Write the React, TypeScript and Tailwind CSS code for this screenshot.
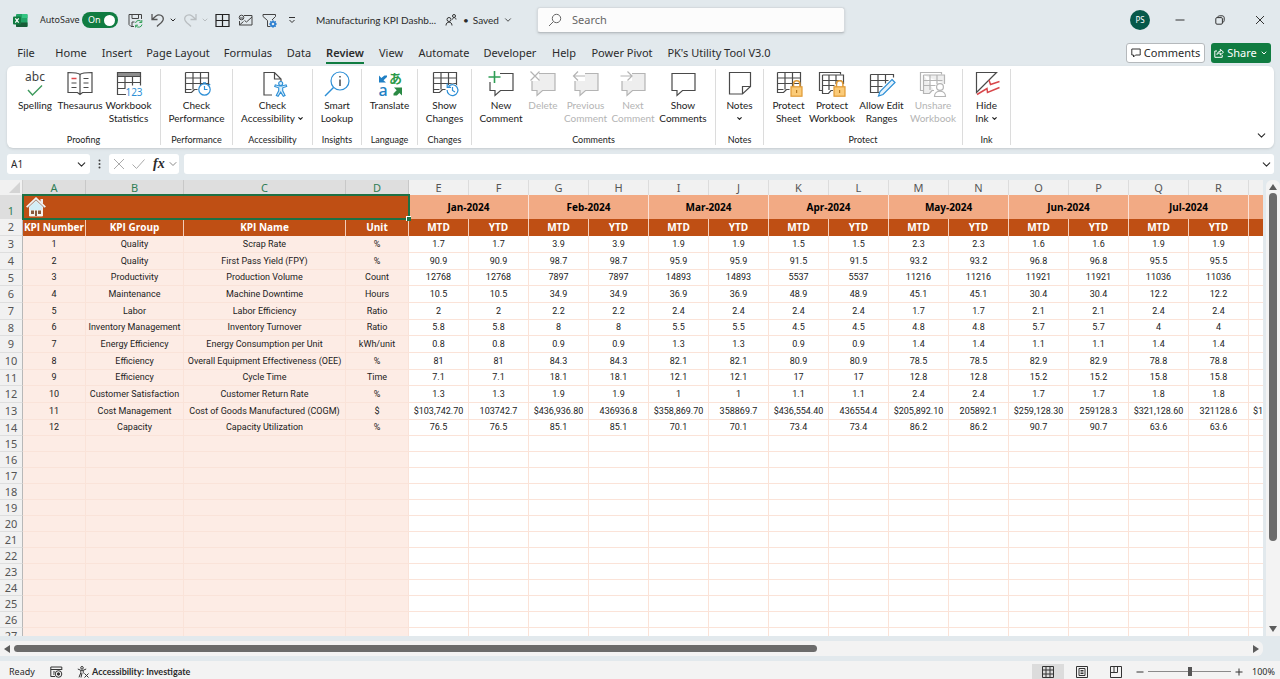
import type { ReactNode } from "react";
import clsx from "clsx";
import { ChevronDown } from "lucide-react";

type Tool = {
  label: string[];
  icon: ReactNode;
  width: string;
  disabled?: boolean;
  menu?: boolean;
};

type Group = { name: string; width: string; tools: Tool[] };

const tabs = [
  { name: "File", width: "w-[48px]" },
  { name: "Home", width: "w-[42px]" },
  { name: "Insert", width: "w-[50px]" },
  { name: "Page Layout", width: "w-[72px]" },
  { name: "Formulas", width: "w-[68px]" },
  { name: "Data", width: "w-[34px]" },
  { name: "Review", width: "w-[58px]" },
  { name: "View", width: "w-[34px]" },
  { name: "Automate", width: "w-[72px]" },
  { name: "Developer", width: "w-[60px]" },
  { name: "Help", width: "w-[48px]" },
  { name: "Power Pivot", width: "w-[68px]" },
  { name: "PK's Utility Tool V3.0", width: "w-[126px]" },
];

const letters = "ABCDEFGHIJKLMNOPQR".split("");

const months = [
  "Jan-2024",
  "Feb-2024",
  "Mar-2024",
  "Apr-2024",
  "May-2024",
  "Jun-2024",
  "Jul-2024",
];

type Kpi = {
  group: string;
  name: string;
  unit: string;
  mtd: string[];
  ytd?: string[];
  next?: string;
};

// ytd is only given where it is written differently from mtd
const kpis: Kpi[] = [
  { group: "Quality", name: "Scrap Rate", unit: "%", mtd: ["1.7", "3.9", "1.9", "1.5", "2.3", "1.6", "1.9"] },
  { group: "Quality", name: "First Pass Yield (FPY)", unit: "%", mtd: ["90.9", "98.7", "95.9", "91.5", "93.2", "96.8", "95.5"] },
  { group: "Productivity", name: "Production Volume", unit: "Count", mtd: ["12768", "7897", "14893", "5537", "11216", "11921", "11036"] },
  { group: "Maintenance", name: "Machine Downtime", unit: "Hours", mtd: ["10.5", "34.9", "36.9", "48.9", "45.1", "30.4", "12.2"] },
  { group: "Labor", name: "Labor Efficiency", unit: "Ratio", mtd: ["2", "2.2", "2.4", "2.4", "1.7", "2.1", "2.4"] },
  { group: "Inventory Management", name: "Inventory Turnover", unit: "Ratio", mtd: ["5.8", "8", "5.5", "4.5", "4.8", "5.7", "4"] },
  { group: "Energy Efficiency", name: "Energy Consumption per Unit", unit: "kWh/unit", mtd: ["0.8", "0.9", "1.3", "0.9", "1.4", "1.1", "1.4"] },
  { group: "Efficiency", name: "Overall Equipment Effectiveness (OEE)", unit: "%", mtd: ["81", "84.3", "82.1", "80.9", "78.5", "82.9", "78.8"] },
  { group: "Efficiency", name: "Cycle Time", unit: "Time", mtd: ["7.1", "18.1", "12.1", "17", "12.8", "15.2", "15.8"] },
  { group: "Customer Satisfaction", name: "Customer Return Rate", unit: "%", mtd: ["1.3", "1.9", "1", "1.1", "2.4", "1.7", "1.8"] },
  {
    group: "Cost Management",
    name: "Cost of Goods Manufactured (COGM)",
    unit: "$",
    mtd: ["$103,742.70", "$436,936.80", "$358,869.70", "$436,554.40", "$205,892.10", "$259,128.30", "$321,128.60"],
    ytd: ["103742.7", "436936.8", "358869.7", "436554.4", "205892.1", "259128.3", "321128.6"],
    next: "$1",
  },
  { group: "Capacity", name: "Capacity Utilization", unit: "%", mtd: ["76.5", "85.1", "70.1", "73.4", "86.2", "90.7", "63.6"] },
];

const emptyRows = Array.from({ length: 13 }, (_, i) => i + 15);

function Icon({ children, muted }: { children: ReactNode; muted?: boolean }) {
  return (
    <svg
      viewBox="0 0 28 26"
      className={clsx("h-[26px] w-[28px] shrink-0 overflow-visible", muted ? "text-[#b4b4b4]" : "text-[#4a4a4a]")}
      fill="none"
      stroke="currentColor"
      strokeWidth="1.2"
      aria-hidden="true"
    >
      {children}
    </svg>
  );
}

const Sheet = () => (
  <path
    d="M2.5 1.5h23v20h-3M2.5 1.5v20h6l3-3h3M2.5 7h23M2.5 12.5h23M8.5 18.5h-6M10 1.5v17M17.5 1.5v14"
    fill="none"
  />
);

const Lock = () => (
  <g stroke="#e09a35">
    <path d="M18.5 16v-3a3.2 3.2 0 0 1 6.4 0v3" fill="none" strokeWidth="1.5" />
    <rect x="16" y="15.8" width="11" height="9.4" fill="#fbcb78" />
    <path d="M21.6 19v3" stroke="#b87a20" />
  </g>
);

const bubble = "M3 2.5h23v17H13.5L8 24.5v-5H3z";

const icons = {
  spelling: (
    <Icon>
      <text x="14" y="10" textAnchor="middle" fontSize="12" fill="#3f3f3f" stroke="none" fontFamily="Noto Sans">
        abc
      </text>
      <path d="M7 19l4.5 5L21 14.5" stroke="#3d9a5c" strokeWidth="1.4" />
    </Icon>
  ),
  thesaurus: (
    <Icon>
      <path d="M14 3.5C12 1.5 8 1.5 2 1.5v20h9.5l2.5 2 2.5-2H26v-20c-6 0-10 0-12 2zM14 3.5v20" />
      <path d="M5.5 7.5h5" stroke="#e0474c" strokeWidth="1.5" />
      <path d="M5.5 12h5M5.5 16.5h5M17.5 7.5h5M17.5 12h5M17.5 16.5h5" />
    </Icon>
  ),
  statistics: (
    <Icon>
      <path d="M2.5 1.5h23v4h-23z" fill="#8d8d8d" />
      <path d="M2.5 5.5v18H11M25.5 5.5v9M2.5 11.5h23M2.5 17.5h8M10 5.5v12M17.5 5.5v9" />
      <text x="19" y="25" textAnchor="middle" fontSize="10" fill="#2d8fd6" stroke="none" fontFamily="Noto Sans">
        123
      </text>
    </Icon>
  ),
  performance: (
    <Icon>
      <Sheet />
      <circle cx="21.5" cy="18.5" r="5.7" fill="#fff" stroke="#2d8fd6" />
      <path d="M21.5 15v3.5h3M20 11.8h3M26 13l1.2 1.2" stroke="#2d8fd6" />
    </Icon>
  ),
  accessibility: (
    <Icon>
      <path d="M13 24H5V1.5h10.5L22 8v3M15.5 1.5V8H22" />
      <g stroke="#2d8fd6" fill="#d9eefb" strokeWidth="1.1">
        <path d="M15.7 15.5l4 1.3v3l-2.4 4.7 1.8.8 2.6-4.2 2.6 4.2 1.8-.8-2.4-4.7v-3l4-1.3-.6-1.7-4.2 1.2h-2.4l-4.2-1.2z" />
        <circle cx="21.7" cy="12.5" r="2" />
      </g>
    </Icon>
  ),
  lookup: (
    <Icon>
      <circle cx="17" cy="10" r="9" stroke="#2d8fd6" />
      <path d="M10.5 16.5L2 25" stroke="#2d8fd6" strokeWidth="1.5" />
      <path d="M17 8.5V15M17 5v1.6" strokeWidth="1.5" />
    </Icon>
  ),
  translate: (
    <Icon>
      <text x="7" y="25" textAnchor="middle" fontSize="16" fontWeight="500" fill="#1f7fc4" stroke="none" fontFamily="Noto Sans">
        a
      </text>
      <text x="19.5" y="12" textAnchor="middle" fontSize="13" fontWeight="700" fill="#2b9a4a" stroke="none" fontFamily="Noto Sans CJK JP">
        あ
      </text>
      <path d="M3 4.5v7h7L7.5 9.2 11 6V4.5H8.5L5.3 7z" fill="#1f7fc4" stroke="none" />
      <path d="M18 16.5h8v8l-2.6-2.6-2.5 2.6h-3.4v-2l3.2-3.2z" fill="#2b8a45" stroke="none" />
    </Icon>
  ),
  changes: (
    <Icon>
      <Sheet />
      <circle cx="21.5" cy="19" r="6.5" fill="#fff" stroke="none" />
      <path d="M17.5 15.5a5.4 5.4 0 1 1-1.4 3.5M16.2 12.5v3.8H20M21.5 16v3.5L24 21" stroke="#2d8fd6" />
    </Icon>
  ),
  newComment: (
    <Icon>
      <path d="M13 2.5h13v17H13.5L8 24.5v-5H3V11" />
      <path d="M7.5 0v12M1.5 6h12" stroke="#2f9e55" strokeWidth="1.6" />
    </Icon>
  ),
  deleteComment: (
    <Icon muted>
      <path d={bubble} fill="#eee" />
      <path d="M1 0h9v10H1z" fill="#fff" stroke="none" />
      <path d="M1.5.5l9 9M10.5.5l-9 9" />
    </Icon>
  ),
  previous: (
    <Icon muted>
      <path d={bubble} fill="#eee" />
      <path d="M1 0h12v10H1z" fill="#fff" stroke="none" />
      <path d="M1.5 5H13M6 .5L1.5 5 6 9.5" />
    </Icon>
  ),
  next: (
    <Icon muted>
      <path d={bubble} fill="#eee" />
      <path d="M1 0h12v10H1z" fill="#fff" stroke="none" />
      <path d="M1.5 5H13M8.5.5L13 5 8.5 9.5" />
    </Icon>
  ),
  comments: (
    <Icon>
      <path d={bubble} />
    </Icon>
  ),
  notes: (
    <Icon>
      <path d="M3.5 1.5h21v14l-8 7.5h-13zM16.5 23v-7.5h8" />
    </Icon>
  ),
  protectSheet: (
    <Icon>
      <Sheet />
      <Lock />
    </Icon>
  ),
  protectWorkbook: (
    <Icon>
      <path d="M4.5 19.5h-3v-18h21v2" />
      <path d="M4.5 4h21v9M4.5 4v18.5h6l2.5-3h2M4.5 9.5h19M4.5 14.5h12M11 4v15M18 4v9" />
      <Lock />
    </Icon>
  ),
  editRanges: (
    <Icon>
      <path d="M2.5 3.5h23v3M2.5 3.5v18h9M2.5 9.5h18M2.5 15.5h12M10 3.5v18M17.5 3.5v9" />
      <path d="M24 8.5l3 3-12 12-4.5 1.5 1.5-4.5z" fill="#e8f4fc" stroke="#2d8fd6" />
    </Icon>
  ),
  unshare: (
    <Icon muted>
      <path d="M4.5 19.5h-3v-18h21v2" />
      <path d="M4.5 4h21v9M4.5 4v18.5h6l2.5-3h2M4.5 9.5h19M4.5 14.5h12M11 4v15M18 4v9" fill="#eee" />
      <circle cx="21" cy="16" r="3.4" fill="#fff" />
      <path d="M15.5 25.5c0-7 11-7 11 0z" fill="#fff" />
    </Icon>
  ),
  ink: (
    <Icon>
      <path d="M3.5 1.5h20l-20 20z" />
      <path d="M16 9l1.5 4.5 9-3M4 23.5l10-6 .5 4 12-5" stroke="#d8474b" strokeWidth="1.5" />
    </Icon>
  ),
};

const groups: Group[] = [
  {
    name: "Proofing",
    width: "w-[154px]",
    tools: [
      { label: ["Spelling"], icon: icons.spelling, width: "w-[43px]" },
      { label: ["Thesaurus"], icon: icons.thesaurus, width: "w-[47px]" },
      { label: ["Workbook", "Statistics"], icon: icons.statistics, width: "w-[50px]" },
    ],
  },
  {
    name: "Performance",
    width: "w-[72px]",
    tools: [{ label: ["Check", "Performance"], icon: icons.performance, width: "w-[60px]" }],
  },
  {
    name: "Accessibility",
    width: "w-[80px]",
    tools: [{ label: ["Check", "Accessibility"], icon: icons.accessibility, width: "w-[70px]", menu: true }],
  },
  {
    name: "Insights",
    width: "w-[49px]",
    tools: [{ label: ["Smart", "Lookup"], icon: icons.lookup, width: "w-[40px]" }],
  },
  {
    name: "Language",
    width: "w-[56px]",
    tools: [{ label: ["Translate"], icon: icons.translate, width: "w-[46px]" }],
  },
  {
    name: "Changes",
    width: "w-[54px]",
    tools: [{ label: ["Show", "Changes"], icon: icons.changes, width: "w-[44px]" }],
  },
  {
    name: "Comments",
    width: "w-[244px]",
    tools: [
      { label: ["New", "Comment"], icon: icons.newComment, width: "w-[46px]" },
      { label: ["Delete"], icon: icons.deleteComment, width: "w-[38px]", disabled: true },
      { label: ["Previous", "Comment"], icon: icons.previous, width: "w-[47px]", disabled: true },
      { label: ["Next", "Comment"], icon: icons.next, width: "w-[48px]", disabled: true },
      { label: ["Show", "Comments"], icon: icons.comments, width: "w-[52px]" },
    ],
  },
  {
    name: "Notes",
    width: "w-[48px]",
    tools: [{ label: ["Notes", ""], icon: icons.notes, width: "w-[36px]", menu: true }],
  },
  {
    name: "Protect",
    width: "w-[199px]",
    tools: [
      { label: ["Protect", "Sheet"], icon: icons.protectSheet, width: "w-[41px]" },
      { label: ["Protect", "Workbook"], icon: icons.protectWorkbook, width: "w-[46px]" },
      { label: ["Allow Edit", "Ranges"], icon: icons.editRanges, width: "w-[53px]" },
      { label: ["Unshare", "Workbook"], icon: icons.unshare, width: "w-[50px]", disabled: true },
    ],
  },
  {
    name: "Ink",
    width: "w-[48px]",
    tools: [{ label: ["Hide", "Ink"], icon: icons.ink, width: "w-[36px]", menu: true }],
  },
];

function TitleBar() {
  return (
    <header className="flex h-10 shrink-0 items-center">
      <div className="flex w-[537px] shrink-0 items-center pl-[13px]">
        <svg viewBox="0 0 15 15" className="h-[15px] w-[15px]" aria-label="Excel">
          <rect x="3" y="1" width="11.5" height="13" rx="1" fill="#21a366" />
          <path d="M9 1h4.5a1 1 0 0 1 1 1v3H9z" fill="#33c481" />
          <path d="M3 9.5h11.5V13a1 1 0 0 1-1 1H4a1 1 0 0 1-1-1z" fill="#185c37" />
          <rect x="0" y="3.5" width="8" height="8" rx="1" fill="#107c41" />
          <path d="M2.3 5.3l3.4 4.4M5.7 5.3L2.3 9.7" stroke="#fff" strokeWidth="1.2" />
        </svg>
        <label className="ml-[12px] flex items-center gap-[6px] text-[9px]">
          <span className="w-[36px] whitespace-nowrap">AutoSave</span>
          <input type="checkbox" defaultChecked className="sr-only" />
          <span className="flex h-4 w-9 items-center justify-between rounded-full bg-[#107c41] pr-[3px] pl-[6px] text-white">
            On
            <span className="h-[11px] w-[11px] rounded-full bg-white" />
          </span>
        </label>
        <button aria-label="Save" className="ml-[10px]">
          <svg viewBox="0 0 15 15" className="h-[15px] w-[15px]" fill="none" stroke="#444">
            <path d="M6 13.5H3l-2-2v-10h12.5V6M4 1.5v4h6.5v-4M4 13V9h2.5" />
            <path d="M7.5 10a3.3 3.3 0 0 1 6-1M13.8 7v2.5h-2.5M14 11.5a3.3 3.3 0 0 1-6 1.2M7.6 14.5v-2.3H10" stroke="#2f9e55" />
          </svg>
        </button>
        <button aria-label="Undo" className="ml-[7px] flex items-center gap-[4px]">
          <svg viewBox="0 0 15 15" className="h-[15px] w-[15px]" fill="none" stroke="#555" strokeWidth="1.3">
            <path d="M2 1v5.5h5.5M2 6.5L6 3c3-2.5 7.5-.5 7.3 3-.1 3-4 5-6.3 7.5" />
          </svg>
          <ChevronDown size={8} strokeWidth={3} />
        </button>
        <button aria-label="Redo" disabled className="ml-[6px] flex items-center gap-[3px] text-[#b9bec1]">
          <svg viewBox="0 0 15 15" className="h-[15px] w-[15px]" fill="none" stroke="#b9bec1" strokeWidth="1.3">
            <path d="M13 1v5.5H7.5M13 6.5L9 3C6 .5 1.5 2.5 1.7 6c.1 3 4 5 6.3 7.5" />
          </svg>
          <ChevronDown size={8} strokeWidth={3} />
        </button>
        <button aria-label="Borders" className="ml-[6px]">
          <svg viewBox="0 0 15 15" className="h-[15px] w-[15px]" fill="none" stroke="#222" strokeWidth="1.2">
            <path d="M1 1.5h13v12H1zM7.5 1.5v12M1 7.5h13" />
          </svg>
        </button>
        <button aria-label="Email" className="ml-[8px]">
          <svg viewBox="0 0 15 15" className="h-[15px] w-[15px]" fill="none" stroke="#444">
            <path d="M6 2.5h8V12H1.5V8M6.5 7.5l2 1.5L14 4M1.5 12l4-3.5" />
            <circle cx="3.5" cy="4.5" r="2.3" />
            <path d="M2 5h3" />
          </svg>
        </button>
        <button aria-label="Filter" className="ml-[9px]">
          <svg viewBox="0 0 15 15" className="h-[15px] w-[15px]" fill="none" stroke="#444">
            <path d="M8 13.5H5.5v-6L1 3.5v-2h12.5v2L10 7" />
            <circle cx="11" cy="11" r="2.2" stroke="#2d7fd0" strokeWidth="1.8" />
            <path d="M11 7v1.5M11 13.5V15M7 11h1.5M13.5 11H15M8.2 8.2l1 1M12.8 12.8l1 1M13.8 8.2l-1 1M9.2 12.8l-1 1" stroke="#2d7fd0" />
          </svg>
        </button>
        <button aria-label="Customize Quick Access Toolbar" className="ml-[11px]">
          <svg viewBox="0 0 8 8" className="h-2 w-2" fill="none" stroke="#333">
            <path d="M1 1.5h6M1.5 4L4 6.5 6.5 4" />
          </svg>
        </button>
        <span className="ml-[20px] w-[124px] font-['Lato',sans-serif] text-[10px] whitespace-nowrap">
          Manufacturing KPI Dashb...
        </span>
        <svg viewBox="0 0 12 12" className="ml-[5px] h-3 w-3" fill="none" stroke="#333" aria-hidden="true">
          <circle cx="4" cy="5.5" r="2" />
          <path d="M1 11.5c0-4.5 6-4.5 6 0M7.5 5.5c0-2.5 3.5-2.5 3.5 0" />
          <circle cx="9" cy="2" r="1.5" />
        </svg>
        <button className="ml-[6px] flex items-center gap-[4px] font-['Lato',sans-serif] text-[10px] whitespace-nowrap">
          <span>•</span>
          <span>Saved</span>
          <ChevronDown size={10} />
        </button>
      </div>
      <label className="flex h-[26px] w-[308px] shrink-0 items-center rounded-[3px] border border-[#d5dade] border-b-[#b9bfc3] bg-[#fcfcfc] pl-[10px] shadow-sm">
        <svg viewBox="0 0 14 14" className="h-[14px] w-[14px]" fill="none" stroke="#666" aria-hidden="true">
          <circle cx="8.5" cy="5.5" r="4.2" />
          <path d="M5.5 8.5L1 13" />
        </svg>
        <input
          aria-label="Search"
          placeholder="Search"
          className="ml-[10px] min-w-0 flex-1 bg-transparent text-[11px] outline-none placeholder:text-[#666]"
        />
      </label>
      <div className="ml-auto flex items-center pr-[13px]">
        <button className="h-5 w-5 rounded-full bg-[#06594a] text-[8px] text-white">PS</button>
        <button aria-label="Minimize" className="ml-[23px] flex w-[14px] justify-center">
          <svg viewBox="0 0 10 10" className="h-[10px] w-[10px]" stroke="#333">
            <path d="M.5 5h9" />
          </svg>
        </button>
        <button aria-label="Restore" className="ml-[26px] flex w-[14px] justify-center">
          <svg viewBox="0 0 10 10" className="h-[10px] w-[10px]" fill="none" stroke="#333">
            <rect x=".8" y="2.6" width="6.6" height="6.6" rx="1.2" />
            <path d="M2.8 2.4C2.9 1.2 3.6.8 4.5.8h2.6c1.3 0 2.1.8 2.1 2v2.6c0 1-.6 1.8-1.7 1.9" />
          </svg>
        </button>
        <button aria-label="Close" className="ml-[26px] flex w-[14px] justify-center">
          <svg viewBox="0 0 10 10" className="h-[10px] w-[10px]" stroke="#333">
            <path d="M1 1l8 8M9 1L1 9" />
          </svg>
        </button>
      </div>
    </header>
  );
}

function Tabs() {
  return (
    <div className="flex h-[26px] shrink-0 items-center pr-[9px] pl-[2px]">
      <nav className="flex" role="tablist">
        {tabs.map((tab) => {
          const active = tab.name === "Review";
          return (
            <button
              key={tab.name}
              role="tab"
              aria-selected={active}
              className={clsx("flex justify-center text-[11px] whitespace-nowrap", tab.width)}
            >
              <span
                className={clsx(
                  "border-b-2 pt-[2px] leading-[18px]",
                  active ? "border-[#107c41] font-semibold" : "border-transparent"
                )}
              >
                {tab.name}
              </span>
            </button>
          );
        })}
      </nav>
      <div className="ml-auto flex gap-[6px] text-[11px]">
        <button className="flex h-5 w-[79px] items-center justify-center gap-[3px] rounded-[3px] border border-[#b5b9bc] bg-white">
          <svg viewBox="0 0 10 10" className="h-[10px] w-[10px]" fill="none" stroke="#333" aria-hidden="true">
            <path d="M.8 1h8.4v6H4.5l-2 2V7H.8z" />
          </svg>
          Comments
        </button>
        <button className="flex h-5 w-[60px] items-center justify-center gap-[3px] rounded-[3px] bg-[#107c41] text-white">
          <svg viewBox="0 0 10 10" className="h-[10px] w-[10px]" fill="none" stroke="#fff" aria-hidden="true">
            <path d="M3 3H.8v6.3h7.4V7M3 6.5c.2-2 1.5-3 3.3-3V1.3l3.2 2.9L6.3 7V5C5 5 4 5.3 3 6.5z" />
          </svg>
          Share
          <ChevronDown size={8} strokeWidth={3} />
        </button>
      </div>
    </div>
  );
}

function ToolButton({ tool }: { tool: Tool }) {
  return (
    <button
      disabled={tool.disabled}
      className={clsx(
        "flex flex-col items-center font-['Lato',sans-serif] text-[10px] leading-[13px] whitespace-nowrap",
        tool.width,
        tool.disabled ? "text-[#b4b4b4]" : "text-[#222]"
      )}
    >
      {tool.icon}
      <span className="mt-[2px]">{tool.label[0]}</span>
      {tool.label.length > 1 && (
        <span className="flex h-[13px] items-center gap-[2px]">
          {tool.label[1]}
          {tool.menu && <ChevronDown size={7} strokeWidth={4} />}
        </span>
      )}
    </button>
  );
}

function Ribbon() {
  return (
    <section className="mr-[6px] ml-[7px] flex h-[82px] shrink-0 rounded-[6px] bg-white py-[3px] shadow">
      {groups.map((group) => (
        <div
          key={group.name}
          className={clsx(
            "flex shrink-0 flex-col items-center justify-between border-r border-[#dcdcdc] pt-[2px]",
            group.width
          )}
        >
          <div className="flex items-start justify-center">
            {group.tools.map((tool) => (
              <ToolButton key={tool.label.join(" ")} tool={tool} />
            ))}
          </div>
          <span className="font-['Lato',sans-serif] text-[9px] leading-[10px] text-[#222]">{group.name}</span>
        </div>
      ))}
      <button aria-label="Collapse the Ribbon" className="mt-auto mr-[6px] mb-[3px] ml-auto">
        <ChevronDown size={13} strokeWidth={2} />
      </button>
    </section>
  );
}

function FormulaBar() {
  return (
    <div className="mr-[6px] ml-[7px] flex h-8 shrink-0 items-center">
      <div className="flex h-5 w-[83px] items-center rounded-[3px] bg-white pr-[2px] pl-[4px]">
        <input aria-label="Name Box" defaultValue="A1" className="min-w-0 flex-1 text-[10px] outline-none" />
        <button aria-label="Open name list">
          <ChevronDown size={13} strokeWidth={2} />
        </button>
      </div>
      <svg viewBox="0 0 3 10" className="mx-[8px] h-[10px] w-[3px]" fill="#444" aria-hidden="true">
        <circle cx="1.5" cy="1.5" r="1" />
        <circle cx="1.5" cy="5" r="1" />
        <circle cx="1.5" cy="8.5" r="1" />
      </svg>
      <div className="flex h-5 w-[70px] items-center rounded-[3px] bg-white pl-[4px]">
        <button aria-label="Cancel" disabled>
          <svg viewBox="0 0 12 12" className="h-3 w-3" stroke="#aaa">
            <path d="M1 1l10 10M11 1L1 11" />
          </svg>
        </button>
        <button aria-label="Enter" disabled className="ml-[7px]">
          <svg viewBox="0 0 13 12" className="h-3 w-[13px]" fill="none" stroke="#aaa">
            <path d="M.5 6.5l4 4 8-9" />
          </svg>
        </button>
        <button
          aria-label="Insert Function"
          className="ml-[8px] font-['Liberation_Serif',serif] text-[14px] leading-none font-bold italic"
        >
          fx
        </button>
        <ChevronDown size={12} strokeWidth={2} className="ml-auto text-[#888]" />
      </div>
      <div className="ml-[5px] flex h-5 flex-1 items-center rounded-[3px] bg-white pr-px">
        <input aria-label="Formula Bar" className="min-w-0 flex-1 outline-none" />
        <button aria-label="Expand Formula Bar">
          <ChevronDown size={13} strokeWidth={2} />
        </button>
      </div>
    </div>
  );
}

const HomeIcon = () => (
  <svg viewBox="0 0 20 20" className="h-5 w-5" aria-hidden="true">
    <path d="M14.5 2H17v5l-2.5-2z" fill="#e8eef0" />
    <path d="M3.5 9.5l6.5-6 6.5 6V19h-13z" fill="#d3eef6" stroke="#fff" strokeWidth=".8" />
    <path d="M.8 10.3L10 1.5l9.2 8.8" fill="none" stroke="#f3f3f1" strokeWidth="2.2" />
    <path d="M.8 11.5L10 2.8l9.2 8.7" fill="none" stroke="#6d5a50" strokeWidth=".6" />
    <path d="M3.5 13h13v6h-13z" fill="#f7f4ee" />
    <path d="M5 13.5h3V17H5zM9 13.5h2V19H9zM12 13.5h3V17h-3z" fill="#8a5a3c" />
  </svg>
);

function RowHeader({ n, selected }: { n: number; selected?: boolean }) {
  return (
    <th
      scope="row"
      className={clsx(
        "border-r border-b border-r-[#b8b8b8] border-b-[#dedede] p-0 font-['Noto_Sans',sans-serif] text-[11px] leading-[14px] font-normal",
        selected ? "bg-[#dedede] pt-[8px] text-[#2e7d55]" : "bg-[#f1f1f1] text-[#555]"
      )}
    >
      {n}
    </th>
  );
}

const kpiCell = "border-r border-b border-[#fae3d9] bg-[#fdece5] p-0";
const dataCell = "border-r border-b border-[#fbe3d8] bg-white p-0";
const headCell = "border-r border-[#f3cdb9] bg-[#bf4f14] p-0 text-white";

function Grid() {
  return (
    <div className="min-w-0 flex-1 overflow-hidden bg-white">
      <table className="w-full table-fixed border-separate border-spacing-0 text-center font-['Roboto',sans-serif] text-[9px] leading-[15px] text-[#222]">
        <colgroup>
          <col className="w-[23px]" />
          <col className="w-[63px]" />
          <col className="w-[98px]" />
          <col className="w-[162px]" />
          <col className="w-[63px]" />
          {months.map((month) => [
            <col key={`${month}-mtd`} className="w-[60px]" />,
            <col key={`${month}-ytd`} className="w-[60px]" />,
          ])}
          <col />
        </colgroup>
        <thead>
          <tr className="h-[15px] font-['Noto_Sans',sans-serif] text-[11px]">
            <td className="border-r border-[#cfcfcf] bg-[#f1f1f1] p-0">
              <svg viewBox="0 0 11 11" className="mr-[2px] ml-auto h-[11px] w-[11px]" fill="#d4d4d4">
                <path d="M11 0v11H0z" />
              </svg>
            </td>
            {letters.map((letter, i) => (
              <th
                key={letter}
                scope="col"
                className={clsx(
                  "border-r p-0 font-normal",
                  i < 4 ? "border-[#c8c8c8] bg-[#dedede] text-[#2e7d55]" : "border-[#dcdcdc] bg-[#f1f1f1] text-[#555]"
                )}
              >
                {letter}
              </th>
            ))}
            <th className="bg-[#f1f1f1] p-0" />
          </tr>
        </thead>
        <tbody>
          <tr className="h-6">
            <RowHeader n={1} selected />
            <td colSpan={4} className="relative bg-[#bf4f14] p-0 outline-2 -outline-offset-1 outline-[#1e7145]">
              <a href="#home" aria-label="Home" className="ml-[3px] block w-5">
                <HomeIcon />
              </a>
              <span className="absolute -right-[2px] -bottom-[2px] h-[5px] w-[5px] border-t border-l border-white bg-[#1e7145]" />
            </td>
            {months.map((month) => (
              <th
                key={month}
                colSpan={2}
                className="border-r border-[#fbe3d8] bg-[#f2aa84] p-0 font-['Noto_Sans',sans-serif] text-[10px] font-bold text-black"
              >
                {month}
              </th>
            ))}
            <td className="bg-[#f2aa84] p-0" />
          </tr>
          <tr className="h-[17px] font-['Open_Sans',sans-serif] text-[10px] whitespace-nowrap">
            <RowHeader n={2} />
            {["KPI Number", "KPI Group", "KPI Name", "Unit"].map((name) => (
              <th key={name} className={headCell}>
                {name}
              </th>
            ))}
            {months.map((month) => [
              <th key={`${month}-mtd`} className={headCell}>
                MTD
              </th>,
              <th key={`${month}-ytd`} className={headCell}>
                YTD
              </th>,
            ])}
            <td className="bg-[#bf4f14] p-0" />
          </tr>
          {kpis.map((kpi, i) => (
            <tr key={kpi.name} className={clsx("whitespace-nowrap", i % 3 === 2 ? "h-4" : "h-[17px]")}>
              <RowHeader n={i + 3} />
              <td className={kpiCell}>{i + 1}</td>
              <td className={kpiCell}>{kpi.group}</td>
              <td className={kpiCell}>{kpi.name}</td>
              <td className={kpiCell}>{kpi.unit}</td>
              {kpi.mtd.map((value, m) => [
                <td key={`mtd-${m}`} className={dataCell}>
                  {value}
                </td>,
                <td key={`ytd-${m}`} className={dataCell}>
                  {kpi.ytd?.[m] ?? value}
                </td>,
              ])}
              <td className="border-b border-[#fbe3d8] bg-white p-0 text-right">{kpi.next}</td>
            </tr>
          ))}
          {emptyRows.map((n) => (
            <tr key={n} className="h-4">
              <RowHeader n={n} />
              {letters.map((letter, i) => (
                <td key={letter} className={i < 4 ? kpiCell : dataCell} />
              ))}
              <td className="border-b border-[#fbe3d8] bg-white p-0" />
            </tr>
          ))}
        </tbody>
      </table>
    </div>
  );
}

function Arrow({ d, label }: { d: string; label: string }) {
  return (
    <button aria-label={label} className="shrink-0">
      <svg viewBox="0 0 8 8" className="h-2 w-2" fill="#5c5c5c">
        <path d={d} />
      </svg>
    </button>
  );
}

function StatusBar() {
  return (
    <footer className="flex h-[18px] shrink-0 items-center bg-[#f3f3f3] pt-[3px] pr-[6px] pl-[9px] text-[9px]">
      <span className="w-[41px]">Ready</span>
      <button aria-label="Record Macro">
        <svg viewBox="0 0 13 12" className="h-3 w-[13px]" fill="none" stroke="#333">
          <path d="M5 10.5H.8V1h11v3M.8 3.5h11M3 6h2M3 8h1.5" />
          <circle cx="8.5" cy="8" r="3.3" />
          <circle cx="8.5" cy="8" r="1.2" fill="#333" />
        </svg>
      </button>
      <button className="ml-[14px] flex items-center gap-[3px] font-['Lato',sans-serif] font-bold">
        <svg viewBox="0 0 12 12" className="h-3 w-3" fill="none" stroke="#333" aria-hidden="true">
          <circle cx="5" cy="1.8" r="1.3" />
          <path d="M.8 3l3 1.3v2.5L2 11.3M9.2 3l-3 1.3M3.8 4.3h2.4v2L7 7.5M7.5 7.5l4 4M11.5 7.5l-4 4M5 7l-1 4.5" />
        </svg>
        Accessibility: Investigate
      </button>
      <div className="ml-auto flex h-full items-center">
        <button aria-label="Normal" aria-pressed="true" className="flex h-full w-8 items-center justify-center bg-[#dcdcdc]">
          <svg viewBox="0 0 12 12" className="h-3 w-3" fill="none" stroke="#333">
            <path d="M.5.5h11v11H.5zM4 .5v11M8 .5v11M.5 4h11M.5 8h11" />
          </svg>
        </button>
        <button aria-label="Page Layout" className="ml-px flex w-[34px] justify-center">
          <svg viewBox="0 0 12 12" className="h-3 w-3" fill="none" stroke="#333">
            <path d="M.5.5h11v11H.5zM3 2.5h6v7H3zM4.5 4.5h3M4.5 6h3M4.5 7.5h3" />
          </svg>
        </button>
        <button aria-label="Page Break Preview" className="flex w-[34px] justify-center">
          <svg viewBox="0 0 12 12" className="h-3 w-3" fill="none" stroke="#333">
            <path d="M.5.5h11v11H.5zM.5 6.5h7v-6M4 .5v6" />
          </svg>
        </button>
        <button aria-label="Zoom Out" className="ml-[3px]">
          <svg viewBox="0 0 8 8" className="h-2 w-2" stroke="#333">
            <path d="M.5 4h7" />
          </svg>
        </button>
        <input
          type="range"
          aria-label="Zoom"
          min={10}
          max={190}
          defaultValue={100}
          className="mx-[4px] h-[10px] w-[83px] appearance-none bg-transparent [&::-webkit-slider-runnable-track]:h-px [&::-webkit-slider-runnable-track]:bg-[#8a8a8a] [&::-webkit-slider-thumb]:-mt-[4px] [&::-webkit-slider-thumb]:h-[9px] [&::-webkit-slider-thumb]:w-1 [&::-webkit-slider-thumb]:appearance-none [&::-webkit-slider-thumb]:bg-[#555]"
        />
        <button aria-label="Zoom In">
          <svg viewBox="0 0 8 8" className="h-2 w-2" stroke="#333">
            <path d="M.5 4h7M4 .5v7" />
          </svg>
        </button>
        <span className="ml-[9px] w-[22px] text-right whitespace-nowrap">100%</span>
      </div>
    </footer>
  );
}

export default function App() {
  return (
    <div className="flex h-screen flex-col overflow-hidden bg-[#e2e9ed] font-['Noto_Sans',sans-serif] text-[#2b2b2b]">
      <TitleBar />
      <Tabs />
      <Ribbon />
      <FormulaBar />
      <main className="flex min-h-0 flex-1">
        <Grid />
        <div className="ml-[3px] flex w-[14px] flex-col items-center rounded-t-[6px] bg-[#f3f3f3] py-[3px]">
          <Arrow label="Scroll up" d="M4 1l4 6H0z" />
          <div className="my-[2px] w-[8px] flex-1">
            <div className="h-[81%] rounded-full bg-[#6b6b6b]" />
          </div>
          <Arrow label="Scroll down" d="M4 7L0 1h8z" />
        </div>
      </main>
      <div className="mt-[5px] mr-[17px] mb-[5px] flex h-[15px] shrink-0 items-center rounded-r-[6px] bg-[#f3f3f3] px-[3px]">
        <Arrow label="Scroll left" d="M1 4l6-4v8z" />
        <div className="mx-[3px] h-[7px] flex-1">
          <div className="h-full w-[65%] rounded-full bg-[#6b6b6b]" />
        </div>
        <Arrow label="Scroll right" d="M7 4L1 0v8z" />
      </div>
      <StatusBar />
    </div>
  );
}
